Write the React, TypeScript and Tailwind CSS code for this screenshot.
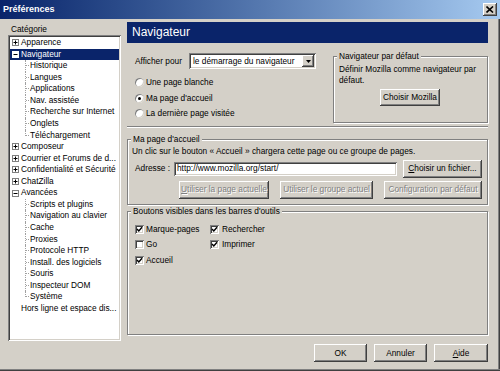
import React from "react";

const raised =
  "bg-[#d4d0c8] shadow-[inset_-1px_-1px_0_#404040,inset_1px_1px_0_#ffffff,inset_-2px_-2px_0_#808080,inset_2px_2px_0_#d4d0c8]";
const sunken =
  "shadow-[inset_1px_1px_0_#808080,inset_-1px_-1px_0_#ffffff,inset_2px_2px_0_#404040,inset_-2px_-2px_0_#d4d0c8]";
const etched = "border border-[#808080] shadow-[inset_1px_1px_0_#ffffff,1px_1px_0_#ffffff]";

function Btn({ children, className = "", disabled = false }: { children: React.ReactNode; className?: string; disabled?: boolean }) {
  return (
    <div
      className={`${raised} flex items-center justify-center shrink-0 ${
        disabled ? "text-[#808080] [text-shadow:1px_1px_0_#ffffff]" : "text-black"
      } ${className}`}
    >
      {children}
    </div>
  );
}

function Radio({ checked = false }: { checked?: boolean }) {
  return (
    <span className="w-[9px] h-[9px] rounded-full bg-white shrink-0 flex items-center justify-center shadow-[inset_1px_1px_0_#808080,inset_-1px_-1px_0_#d4d0c8]">
      {checked && <span className="w-[3px] h-[3px] rounded-full bg-black" />}
    </span>
  );
}

function Check({ checked = false }: { checked?: boolean }) {
  return (
    <span className={`w-[9px] h-[9px] bg-white shrink-0 flex items-center justify-center ${sunken}`}>
      {checked && (
        <svg width="7" height="7" viewBox="0 0 7 7">
          <path d="M1 3 L2.8 5 L6 1.2" stroke="#000" strokeWidth="1.4" fill="none" />
        </svg>
      )}
    </span>
  );
}

function Expander({ open, sel }: { open: boolean; sel?: boolean }) {
  return (
    <svg width="7" height="7" viewBox="0 0 7 7" className="shrink-0">
      <rect x="0.5" y="0.5" width="6" height="6" fill="#fff" stroke={sel ? "#fff" : "#808080"} />
      <line x1="1.5" y1="3.5" x2="5.5" y2="3.5" stroke="#000" />
      {!open && <line x1="3.5" y1="1.5" x2="3.5" y2="5.5" stroke="#000" />}
    </svg>
  );
}

type Row = { label: string; level: 0 | 1; exp?: "+" | "-" | ""; sel?: boolean; last?: boolean };

const rows: Row[] = [
  { label: "Apparence", level: 0, exp: "+" },
  { label: "Navigateur", level: 0, exp: "-", sel: true },
  { label: "Historique", level: 1 },
  { label: "Langues", level: 1 },
  { label: "Applications", level: 1 },
  { label: "Nav. assistée", level: 1 },
  { label: "Recherche sur Internet", level: 1 },
  { label: "Onglets", level: 1 },
  { label: "Téléchargement", level: 1, last: true },
  { label: "Composeur", level: 0, exp: "+" },
  { label: "Courrier et Forums de d...", level: 0, exp: "+" },
  { label: "Confidentialité et Sécurité", level: 0, exp: "+" },
  { label: "ChatZilla", level: 0, exp: "+" },
  { label: "Avancées", level: 0, exp: "-" },
  { label: "Scripts et plugins", level: 1 },
  { label: "Navigation au clavier", level: 1 },
  { label: "Cache", level: 1 },
  { label: "Proxies", level: 1 },
  { label: "Protocole HTTP", level: 1 },
  { label: "Install. des logiciels", level: 1 },
  { label: "Souris", level: 1 },
  { label: "Inspecteur DOM", level: 1 },
  { label: "Système", level: 1, last: true },
  { label: "Hors ligne et espace dis...", level: 0, exp: "" },
];

function TreeRow({ r }: { r: Row }) {
  if (r.level === 0) {
    return (
      <div
        className={`flex items-center h-[11.57px] pl-[2px] whitespace-nowrap ${
          r.sel ? "bg-[#0a246a] text-white" : "text-black"
        }`}
      >
        {r.exp ? <Expander open={r.exp === "-"} sel={r.sel} /> : <span className="w-[7px] shrink-0" />}
        <span className="pl-[2px] leading-[11.57px]">{r.label}</span>
      </div>
    );
  }
  return (
    <div className="flex h-[11.57px] items-stretch whitespace-nowrap">
      <span className="w-[15px] shrink-0" />
      {r.last ? (
        <span className="w-[4px] h-[6px] self-start shrink-0 border-l border-b border-dotted border-[#a0a0a0]" />
      ) : (
        <span className="w-[4px] shrink-0 border-l border-dotted border-[#a0a0a0]">
          <span className="block h-[6px] border-b border-dotted border-[#a0a0a0]" />
        </span>
      )}
      <span className="pl-[1px] leading-[11.57px]">{r.label}</span>
    </div>
  );
}

function Group({ title, className = "", children }: { title: string; className?: string; children: React.ReactNode }) {
  return (
    <div className={`relative ${etched} ${className}`}>
      <span className="absolute left-[3px] -top-[6px] px-[2px] bg-[#d4d0c8] leading-[11px] whitespace-nowrap">{title}</span>
      {children}
    </div>
  );
}

export default function App() {
  return (
    <div className="w-[500px] h-[371px] bg-[#d4d0c8] overflow-hidden flex flex-col text-[8.3px] leading-[11px] text-black font-['Liberation_Sans',Arial,sans-serif] shadow-[inset_0_-1px_0_#404040,inset_0_-2px_0_#808080,inset_-1px_0_0_#404040,inset_-2px_0_0_#808080]">
      {/* Title bar */}
      <div className="h-[19px] shrink-0 flex items-center justify-between bg-gradient-to-r from-[#0a246a] to-[#a6caf0] pl-[3px] pr-[3px]">
        <span className="text-white font-bold text-[9px]">Préférences</span>
        <div className={`${raised} w-[14px] h-[13px] flex items-center justify-center`}>
          <svg width="8" height="7" viewBox="0 0 8 7">
            <path d="M0.5 0.5 L7 6.5 M7 0.5 L0.5 6.5" stroke="#000" strokeWidth="1.6" />
          </svg>
        </div>
      </div>

      {/* Main */}
      <div className="flex h-[322px] shrink-0">
        {/* Left column */}
        <div className="pl-[8px] pt-[5px] w-[121px] shrink-0 flex flex-col">
          <div className="h-[11px] pl-[3px]">Catégorie</div>
          <div className={`bg-white h-[306px] w-[113px] p-[2px] overflow-hidden ${sunken}`}>
            {rows.map((r, i) => (
              <TreeRow key={i} r={r} />
            ))}
          </div>
        </div>

        {/* Right column */}
        <div className="ml-[6px] w-[361px] pt-[3px] flex flex-col">
          <div className="h-[21px] bg-[#0a246a] text-white text-[12px] leading-[21px] pl-[5px]">Navigateur</div>

          {/* Section 1 */}
          <div className="h-[83px] flex">
            <div className="w-[206px] pl-[8px] pt-[10px] flex flex-col">
              <div className="flex items-center h-[16px]">
                <span className="w-[54px]">Afficher pour</span>
                <div className={`bg-white w-[127px] h-[16px] flex items-center justify-between pl-[4px] pr-[2px] ${sunken}`}>
                  <span className="whitespace-nowrap">le démarrage du navigateur</span>
                  <div className={`${raised} w-[12px] h-[12px] flex items-center justify-center`}>
                    <svg width="5" height="3" viewBox="0 0 5 3">
                      <path d="M0 0 H5 L2.5 3 Z" fill="#000" />
                    </svg>
                  </div>
                </div>
              </div>
              <div className="mt-[6px] flex flex-col">
                <div className="flex items-center gap-[2px] h-[15.5px]">
                  <Radio />
                  <span>Une page blanche</span>
                </div>
                <div className="flex items-center gap-[2px] h-[15.5px]">
                  <Radio checked />
                  <span>Ma page d'accueil</span>
                </div>
                <div className="flex items-center gap-[2px] h-[15.5px]">
                  <Radio />
                  <span>La dernière page visitée</span>
                </div>
              </div>
            </div>
            <Group title="Navigateur par défaut" className="mt-[13px] w-[155px] h-[67px] pl-[5px] pt-[7px] flex flex-col">
              <div className="w-[148px]">Définir Mozilla comme navigateur par défaut.</div>
              <div className="flex justify-center pr-[6px] mt-[3px]">
                <Btn className="w-[60px] h-[17px]">Choisir Mozilla</Btn>
              </div>
            </Group>
          </div>

          {/* Separator */}
          <div className="h-[2px] border-t border-[#808080] border-b border-b-white" />

          {/* Section 2 */}
          <Group title="Ma page d'accueil" className="mt-[11px] pt-[6px] pb-[5px] flex flex-col">
            <div className="pl-[4px] whitespace-nowrap">
              Un clic sur le bouton « Accueil » chargera cette page ou ce groupe de pages.
            </div>
            <div className="flex items-center h-[18px] mt-[2.5px] pl-[7px]">
              <span className="w-[39px]">Adresse :</span>
              <div className={`bg-white w-[223px] h-[14px] flex items-center pl-[3px] ${sunken}`}>
                http://www.mozilla.org/start/
              </div>
              <Btn className="ml-[6px] w-[79px] h-[18px]">
                <span>
                  <u>C</u>hoisir un fichier...
                </span>
              </Btn>
            </div>
            <div className="flex h-[18px] mt-[3px] pl-[51px] gap-[11px]">
              <Btn disabled className="w-[90px] h-[18px]">
                <span>
                  <u>U</u>tiliser la page actuelle
                </span>
              </Btn>
              <Btn disabled className="w-[93px] h-[18px]">
                Utiliser le groupe actuel
              </Btn>
              <Btn disabled className="w-[98px] h-[18px]">
                Configuration par défaut
              </Btn>
            </div>
          </Group>

          {/* Section 3 */}
          <Group title="Boutons visibles dans les barres d'outils" className="mt-[6px] h-[124px] pt-[10px] pl-[7px] flex">
            <div className="w-[75px] flex flex-col">
              <div className="flex items-center gap-[2px] h-[15.5px]">
                <Check checked />
                <span>Marque-pages</span>
              </div>
              <div className="flex items-center gap-[2px] h-[15.5px]">
                <Check />
                <span>Go</span>
              </div>
              <div className="flex items-center gap-[2px] h-[15.5px]">
                <Check checked />
                <span>Accueil</span>
              </div>
            </div>
            <div className="flex flex-col">
              <div className="flex items-center gap-[3px] h-[15.5px]">
                <Check checked />
                <span>Rechercher</span>
              </div>
              <div className="flex items-center gap-[3px] h-[15.5px]">
                <Check checked />
                <span>Imprimer</span>
              </div>
            </div>
          </Group>
        </div>
      </div>

      {/* Bottom buttons */}
      <div className="flex justify-end gap-[7px] pt-[3px] pr-[12px]">
        <Btn className="w-[53px] h-[18px]">OK</Btn>
        <Btn className="w-[53px] h-[18px]">Annuler</Btn>
        <Btn className="w-[54px] h-[18px]">
          <span>
            <u>A</u>ide
          </span>
        </Btn>
      </div>
    </div>
  );
}
